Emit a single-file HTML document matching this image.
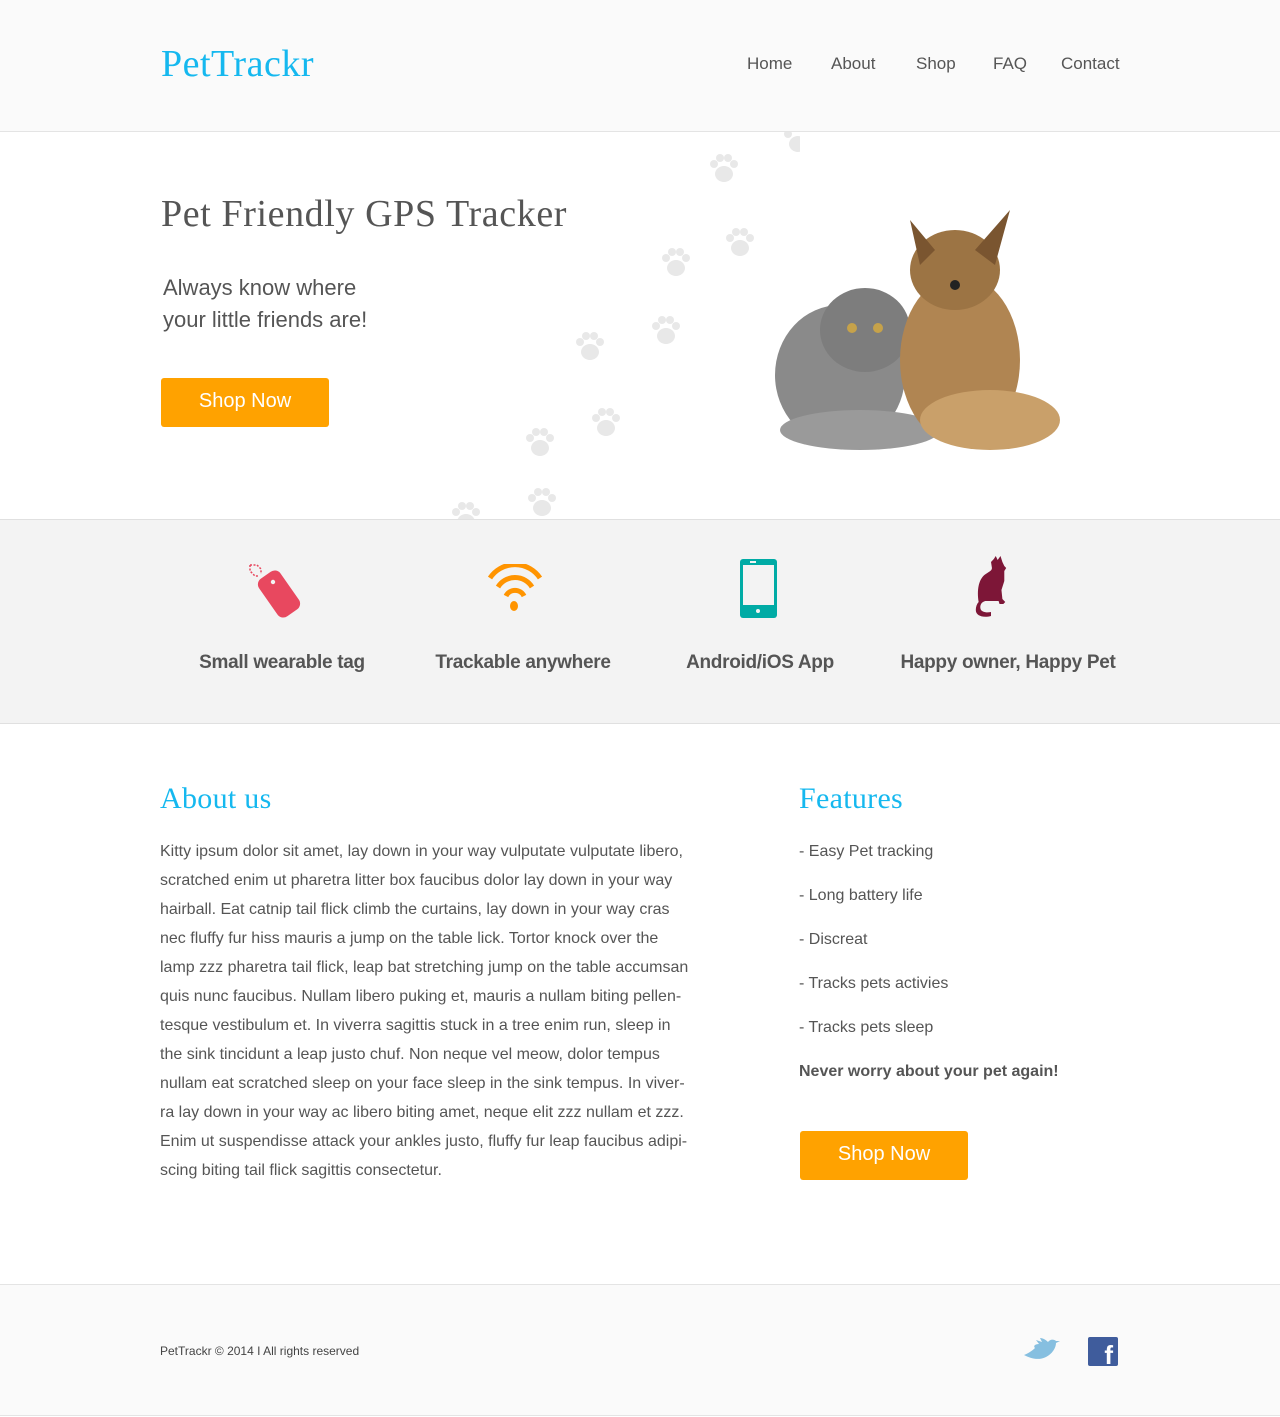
<!DOCTYPE html>
<html><head><meta charset="utf-8"><style>
*{margin:0;padding:0;box-sizing:border-box}
body{width:1280px;height:1417px;background:#fff;font-family:"Liberation Sans",sans-serif;color:#555;position:relative;overflow:hidden}
.abs{position:absolute}
.slab{font-family:"Liberation Serif",serif}
header{position:absolute;left:0;top:0;width:1280px;height:132px;background:#fafafa;border-bottom:1px solid #e4e4e4}
.nav a{position:absolute;top:54px;font-size:17px;color:#555;text-decoration:none}
.band{position:absolute;top:519px;left:0;width:1280px;height:205px;background:#f3f3f3;border-top:1px solid #e0e0e0;border-bottom:1px solid #e0e0e0}
.band .lbl{position:absolute;top:132px;font-size:19px;font-weight:bold;color:#555;text-align:center;width:260px;letter-spacing:-0.3px}
.btn{position:absolute;width:168px;height:49px;background:#ffa200;border-radius:3px;color:#fff;font-size:20px;text-align:center;line-height:47px}
.p{font-size:16px;line-height:29px}
.feat{position:absolute;left:799px;font-size:16px}
footer{position:absolute;top:1284px;left:0;width:1280px;height:132px;background:#fafafa;border-top:1px solid #e4e4e4;border-bottom:1px solid #e4e4e4}
</style></head><body>
<header>
<div class="abs slab" style="left:161px;top:42px;font-size:38px;color:#15b8ef;letter-spacing:0.5px">PetTrackr</div>
<div class="nav"><a style="left:747px">Home</a><a style="left:831px">About</a><a style="left:916px">Shop</a><a style="left:993px">FAQ</a><a style="left:1061px">Contact</a></div>
</header>
<svg width="0" height="0" style="position:absolute"><defs><g id="pw"><ellipse cx="0" cy="6" rx="9" ry="8"/><circle cx="-10" cy="-4" r="4"/><circle cx="-4" cy="-10" r="4"/><circle cx="4" cy="-10" r="4"/><circle cx="10" cy="-4" r="4"/></g></defs></svg>
<svg class="abs" style="left:440px;top:132px" width="360" height="388">
<g fill="#e8e8e8">
<use href="#pw" x="358" y="6"/><use href="#pw" x="284" y="36"/><use href="#pw" x="300" y="110"/><use href="#pw" x="236" y="130"/><use href="#pw" x="226" y="198"/><use href="#pw" x="150" y="214"/><use href="#pw" x="166" y="290"/><use href="#pw" x="100" y="310"/><use href="#pw" x="102" y="370"/><use href="#pw" x="26" y="384"/>
</g></svg>
<div class="abs slab" style="left:161px;top:192px;font-size:38px;color:#555;letter-spacing:0.6px">Pet Friendly GPS Tracker</div>
<div class="abs" style="left:163px;top:272px;font-size:22px;line-height:32px;color:#555">Always know where<br>your little friends are!</div>
<div class="btn" style="left:161px;top:378px">Shop Now</div>
<svg class="abs" style="left:760px;top:180px" width="320" height="290">
<ellipse cx="80" cy="195" rx="65" ry="70" fill="#8a8a8a"/>
<ellipse cx="100" cy="250" rx="80" ry="20" fill="#9a9a9a"/>
<ellipse cx="105" cy="150" rx="45" ry="42" fill="#7d7d7d"/>
<circle cx="92" cy="148" r="5" fill="#c6a24a"/><circle cx="118" cy="148" r="5" fill="#c6a24a"/>
<ellipse cx="200" cy="180" rx="60" ry="85" fill="#b08552"/>
<ellipse cx="195" cy="90" rx="45" ry="40" fill="#9c7444"/>
<path d="M150 40 L175 70 L160 85Z M250 30 L215 70 L235 85Z" fill="#7a5530"/>
<ellipse cx="230" cy="240" rx="70" ry="30" fill="#c9a06a"/>
<circle cx="195" cy="105" r="5" fill="#222"/>
</svg>
<div class="band">
<svg class="abs" style="left:246px;top:41px" width="62" height="62"><path d="M4 4h7l4 4v5" fill="none" stroke="#e8485f" stroke-width="1.5" stroke-dasharray="2 1.5"/><path d="M4 4v6l5 5h4" fill="none" stroke="#e8485f" stroke-width="1.5" stroke-dasharray="2 1.5"/><rect x="20" y="10" width="26" height="46" rx="7" transform="rotate(-35 33 33)" fill="#e8485f"/><circle cx="27" cy="21" r="2.2" fill="#f3f3f3"/></svg>
<svg class="abs" style="left:486px;top:44px" width="58" height="52"><g fill="none" stroke="#ff9400" stroke-width="5"><path d="M4 14a30 30 0 0 1 50 0"/><path d="M12 23a20 20 0 0 1 34 0"/><path d="M20 32a10 10 0 0 1 18 0"/></g><ellipse cx="28" cy="42" rx="4" ry="5" fill="#ff9400"/></svg>
<svg class="abs" style="left:740px;top:39px" width="38" height="60"><rect x="0" y="0" width="37" height="59" rx="3" fill="#00aba5"/><rect x="3" y="6" width="31" height="40" fill="#f3f3f3"/><rect x="10" y="2" width="6" height="2" fill="#f3f3f3"/><circle cx="18" cy="52" r="2" fill="#f3f3f3"/></svg>
<svg class="abs" style="left:972px;top:36px" width="42" height="68"><g transform="scale(0.95,1.0)"><path d="M30 0l2 6 2 4 2 2-2 3 0 10-3 9 1 9 3 3-2 2-4 0-1-3-14 0c-4 1-6 4-5 8 1 3 6 4 11 3l0 4c-8 2-16 0-16-6 0-3 1-6 3-8-2-12 0-22 6-27 4-3 8-4 8-7l-1-6 3-3 2-3 2 4z" fill="#7d1637"/></g></svg>
<div class="lbl" style="left:152px">Small wearable tag</div>
<div class="lbl" style="left:393px">Trackable anywhere</div>
<div class="lbl" style="left:630px">Android/iOS App</div>
<div class="lbl" style="left:878px">Happy owner, Happy Pet</div>
</div>
<div class="abs slab" style="left:160px;top:782px;font-size:30px;color:#15b8ef;letter-spacing:0.3px">About us</div>
<div class="abs p" style="left:160px;top:837px;width:540px">Kitty ipsum dolor sit amet, lay down in your way vulputate vulputate libero,<br>scratched enim ut pharetra litter box faucibus dolor lay down in your way<br>hairball. Eat catnip tail flick climb the curtains, lay down in your way cras<br>nec fluffy fur hiss mauris a jump on the table lick. Tortor knock over the<br>lamp zzz pharetra tail flick, leap bat stretching jump on the table accumsan<br>quis nunc faucibus. Nullam libero puking et, mauris a nullam biting pellen-<br>tesque vestibulum et. In viverra sagittis stuck in a tree enim run, sleep in<br>the sink tincidunt a leap justo chuf. Non neque vel meow, dolor tempus<br>nullam eat scratched sleep on your face sleep in the sink tempus. In viver-<br>ra lay down in your way ac libero biting amet, neque elit zzz nullam et zzz.<br>Enim ut suspendisse attack your ankles justo, fluffy fur leap faucibus adipi-<br>scing biting tail flick sagittis consectetur.</div>
<div class="abs slab" style="left:799px;top:782px;font-size:30px;color:#15b8ef;letter-spacing:0.3px">Features</div>
<div class="feat" style="top:843px">- Easy Pet tracking</div>
<div class="feat" style="top:887px">- Long battery life</div>
<div class="feat" style="top:931px">- Discreat</div>
<div class="feat" style="top:975px">- Tracks pets activies</div>
<div class="feat" style="top:1019px">- Tracks pets sleep</div>
<div class="feat" style="top:1063px;font-weight:bold">Never worry about your pet again!</div>
<div class="btn" style="left:800px;top:1131px">Shop Now</div>
<footer>
<div class="abs" style="left:160px;top:59px;font-size:12px;color:#444">PetTrackr © 2014 I All rights reserved</div>
<svg class="abs" style="left:1022px;top:52px" width="40" height="30"><path d="M2 18c6 3 14 6 22 2 6-3 10-9 10-14l4-2-4 0c-2-2-6-2-8 1-2-2-5-4-8-4l2 4-6-2 3 4c-4 0-6 2-4 4-3 3-8 6-11 7z" fill="#86bfe0"/></svg>
<div class="abs" style="left:1088px;top:52px;width:30px;height:29px;background:#3f5c9c;border-radius:2px;color:#fff;font-weight:bold;font-size:26px;line-height:36px;text-align:right;padding-right:5px;overflow:hidden">f</div>
</footer>
</body></html>
